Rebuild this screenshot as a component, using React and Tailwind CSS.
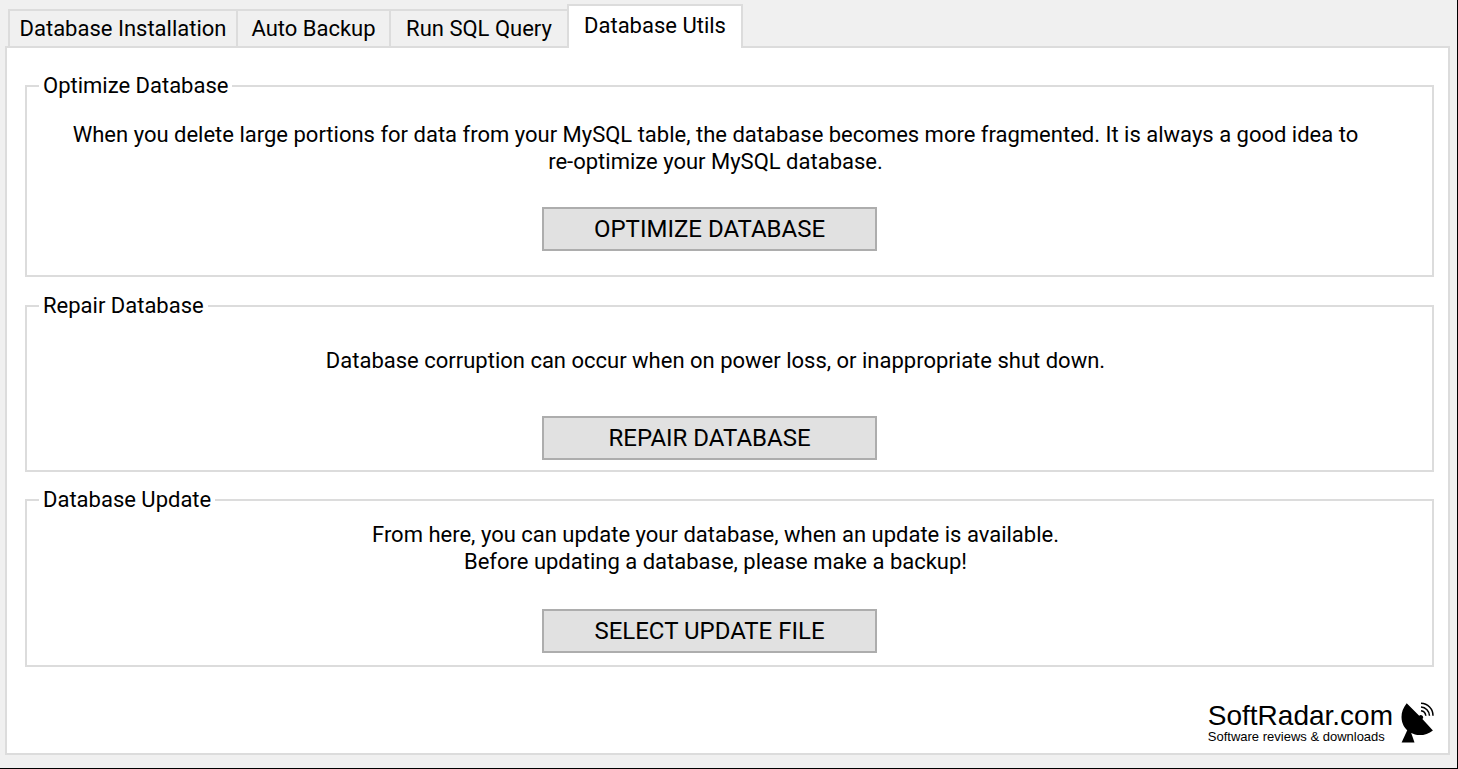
import React from "react";

const tabs = [
  { id: "installation", label: "Database Installation", width: "w-[228px]" },
  { id: "backup", label: "Auto Backup", width: "w-[153px]" },
  { id: "query", label: "Run SQL Query", width: "w-[178px]" },
  { id: "utils", label: "Database Utils", width: "w-[176px]" },
];

const ActionButton = ({ children }) => (
  <button
    type="button"
    className="w-[335px] h-11 border-2 border-[#adadad] bg-[#e1e1e1] text-2xl leading-[27px]"
  >
    {children}
  </button>
);

const Group = ({ title, className, children }) => (
  <fieldset
    className={`border-2 border-[#dcdcdc] pl-3 pr-[52px] flex flex-col items-center text-center ${className}`}
  >
    <legend className="px-1 text-left">{title}</legend>
    {children}
  </fieldset>
);

const Logo = () => (
  <a
    href="#"
    className="flex items-center gap-2 font-['Liberation_Sans',Arial,sans-serif] text-black"
  >
    <span className="flex flex-col">
      <span className="text-[28px] leading-7">SoftRadar.com</span>
      <span className="text-[13px] leading-[14px]">
        Software reviews &amp; downloads
      </span>
    </span>
    <svg width="33" height="42" viewBox="0 0 33 42" aria-hidden="true">
      <path d="M5.7 1.3 18.2 13.8A2.2 2.2 0 1 1 21.4 17L31.9 28.4C27 32.5 20 34 14 32.6L9 30.5C0 25-3 12 5.7 1.3Z" />
      <path d="M6.6 27.5H9L13.5 40.5H.6Z" />
      <g fill="none" stroke="black" strokeWidth="1.5">
        <path d="M20 8.8a5.6 5.6 0 0 1 4.8 5" />
        <path d="M20 5a9 9 0 0 1 8.5 8.8" />
        <path d="M20 1.2a12.4 12.4 0 0 1 12 12.6" />
      </g>
    </svg>
  </a>
);

const App = () => {
  return (
    <div className="min-h-screen flex flex-col bg-[#f0f0f0] border-r border-b border-black pt-1 pl-[5px] pr-[7px] pb-[13px] text-black text-[22px] leading-[27px] font-[Roboto,Arial,sans-serif]">
      {/* Tabs */}
      <div role="tablist" className="flex items-end pl-[3px] -mb-[2px] z-10">
        {tabs.map((tab) => {
          const active = tab.id === "utils";
          return (
            <button
              key={tab.id}
              type="button"
              role="tab"
              aria-selected={active}
              className={`${tab.width} border-2 border-[#dcdcdc] ${
                active ? "h-11 pb-1 border-b-0 bg-white" : "h-[39px] border-r-0"
              }`}
            >
              {tab.label}
            </button>
          );
        })}
      </div>

      {/* Database Utils */}
      <main className="grow flex flex-col border-2 border-[#dcdcdc] bg-white pl-[18px] pr-[14px] pt-6 pb-[9px]">
        <Group title="Optimize Database" className="pb-6 mb-[15px]">
          <p className="pl-3 pt-[22px] pb-8">
            When you delete large portions for data from your MySQL table, the
            database becomes more fragmented. It is always a good idea to{" "}
            <span className="whitespace-nowrap">re-optimize</span> your MySQL
            database.
          </p>
          <ActionButton>OPTIMIZE DATABASE</ActionButton>
        </Group>

        <Group title="Repair Database" className="pb-[10px] mb-[14px]">
          <p className="pl-3 pt-7 pb-[42px]">
            Database corruption can occur when on power loss, or inappropriate
            shut down.
          </p>
          <ActionButton>REPAIR DATABASE</ActionButton>
        </Group>

        <Group title="Database Update" className="pb-3">
          <p className="pl-3 pt-2 pb-[34px]">
            From here, you can update your database, when an update is
            available.
            <br />
            Before updating a database, please make a backup!
          </p>
          <ActionButton>SELECT UPDATE FILE</ActionButton>
        </Group>

        <div className="mt-auto self-end">
          <Logo />
        </div>
      </main>
    </div>
  );
};

export default App;
